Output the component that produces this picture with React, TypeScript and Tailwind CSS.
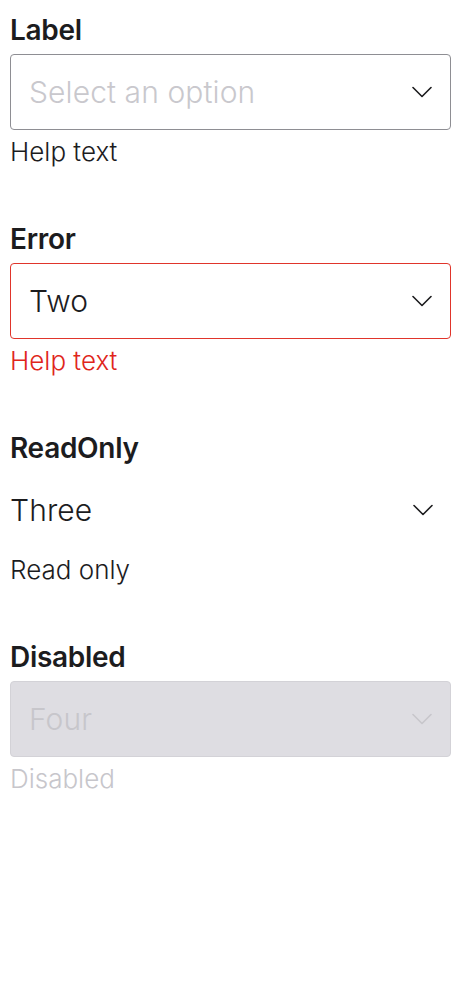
import React from "react";

const Chevron = ({ color }: { color: string }) => (
  <svg width="20" height="12" viewBox="0 0 20 12" fill="none" className="shrink-0">
    <path d="M1 1.5 L10 10.5 L19 1.5" stroke={color} strokeWidth="1.6" strokeLinecap="round" strokeLinejoin="round" />
  </svg>
);

type Variant = "default" | "error" | "readonly" | "disabled";

function Field({ label, value, placeholder, help, variant }: { label: string; value?: string; placeholder?: string; help: string; variant: Variant }) {
  const box =
    variant === "default"
      ? "border border-[#8e8e93] rounded-[4px] bg-white px-[18px]"
      : variant === "error"
      ? "border border-[#e0352b] rounded-[4px] bg-white px-[18px]"
      : variant === "disabled"
      ? "border border-[#d3d2d7] rounded-[4px] bg-[#dedde2] px-[18px]"
      : "pr-[18px]";
  const textColor =
    variant === "disabled" ? "text-[#c7c6cb]" : value ? "text-[#1c1c1e]" : "text-[#c9c8cd]";
  const helpColor =
    variant === "error" ? "text-[#e0251b]" : variant === "disabled" ? "text-[#c7c6cb]" : "text-[#1c1c1e]";
  const chevColor = variant === "disabled" ? "#c7c6cb" : "#1c1c1e";
  return (
    <div className="flex flex-col">
      <div className="h-[32px] leading-[32px] text-[28px] font-semibold tracking-[-0.3px] text-[#1c1c1e]">{label}</div>
      <div className={`mt-[8px] h-[76px] flex items-center justify-between ${box}`}>
        <span className={`text-[30px] font-light tracking-[0.1px] ${textColor}`}>{value ?? placeholder}</span>
        <Chevron color={chevColor} />
      </div>
      <div className={`mt-[6px] h-[32px] leading-[32px] text-[26px] font-light ${helpColor}`}>{help}</div>
    </div>
  );
}

export default function App() {
  return (
    <div className="min-h-[1000px] bg-white pt-[14px] px-[10px] flex flex-col gap-[55px]" style={{ fontFamily: "Inter, 'Noto Sans', sans-serif" }}>
      <Field label="Label" placeholder="Select an option" help="Help text" variant="default" />
      <Field label="Error" value="Two" help="Help text" variant="error" />
      <Field label="ReadOnly" value="Three" help="Read only" variant="readonly" />
      <Field label="Disabled" value="Four" help="Disabled" variant="disabled" />
    </div>
  );
}
